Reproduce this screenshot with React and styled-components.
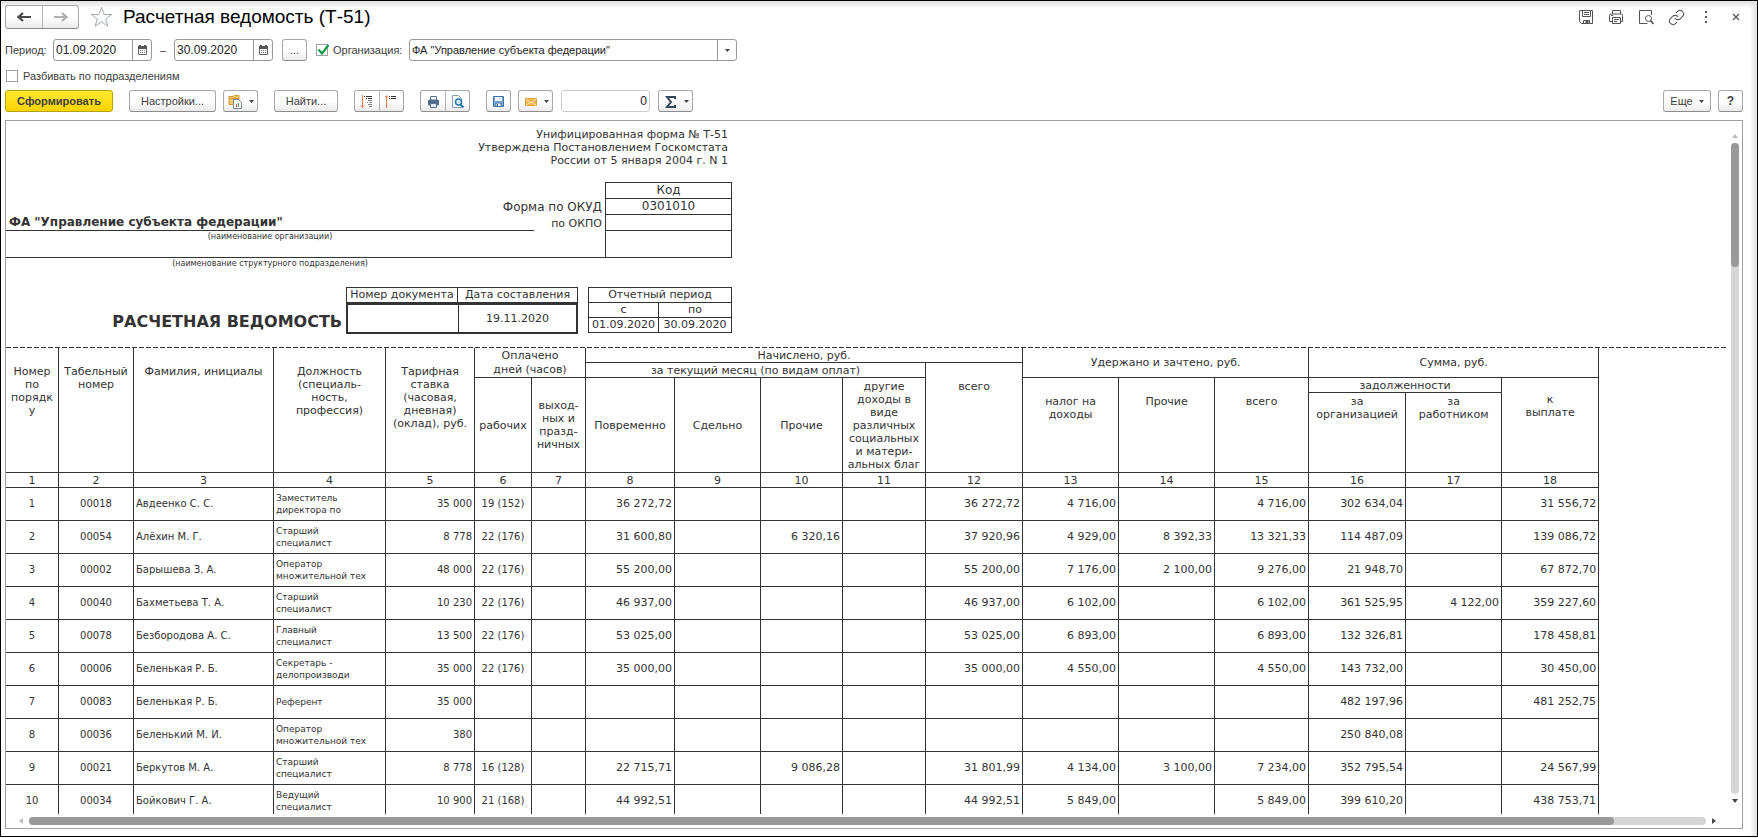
import { useState } from 'react';
import styled, { createGlobalStyle, css } from 'styled-components';
import { Link } from 'lucide-react';

const GlobalStyle = createGlobalStyle`
  * {
    box-sizing: border-box;
  }

  body {
    margin: 0;
    background-color: #fff;
    color: #404040;
    font-family: "Liberation Sans", Arial, sans-serif;
    font-size: 11px;
  }

  button, input, select {
    font: inherit;
    color: inherit;
    margin: 0;
  }
`;

const lineColor = '#333';

const StyledWindow = styled.div`
  display: flex;
  flex-direction: column;
  height: calc(100vh - 1px);
  padding: 4px 14px 7px 4px;
  border: 1px solid #000;
  box-shadow: inset -4px 4px 4px #e4e2e4;
`;

const StyledTitleBar = styled.header`
  display: flex;
  align-items: center;
  height: 24px;
`;

const StyledTitle = styled.h1`
  flex: 1;
  margin: 0 0 0 10px;
  color: #000;
  font-size: 19px;
  font-weight: normal;
  line-height: 24px;
`;

const StyledRow = styled.div`
  display: flex;
  align-items: center;
  height: ${(props) => props.$height};
  margin-top: ${(props) => props.$top};
`;

const buttonFace = css`
  border: 1px solid #a8a8a8;
  border-bottom-color: #8c8c8c;
  background: linear-gradient(#fff 50%, #ebebeb);
`;

const StyledButton = styled.button`
  ${buttonFace};
  display: flex;
  align-items: center;
  justify-content: center;
  gap: 6px;
  flex: none;
  width: ${(props) => props.$width};
  height: 22px;
  margin-left: ${(props) => props.$gap || '0'};
  padding: 0;
  border-radius: 3px;

  &.primary {
    border-color: #b7a20a;
    background: linear-gradient(#ffe92e, #f8d400);
    font-weight: bold;
  }

  &.strong {
    font-size: 12px;
    font-weight: bold;
  }
`;

const StyledButtonGroup = styled.div`
  ${buttonFace};
  display: flex;
  flex: none;
  height: ${(props) => props.$height || '22px'};
  margin-left: ${(props) => props.$gap || '0'};
  border-radius: 3px;

  button {
    display: flex;
    align-items: center;
    justify-content: center;
    width: ${(props) => props.$width};
    padding: 0;
    border: none;
    background: none;
  }

  button + button {
    border-left: 1px solid #b4b4b4;
  }
`;

const StyledStar = styled.button`
  display: flex;
  margin-left: 11px;
  padding: 0;
  border: none;
  background: none;
`;

const StyledWindowActions = styled.div`
  display: flex;
  margin-right: -8px;

  button {
    display: flex;
    align-items: center;
    justify-content: center;
    width: 30px;
    height: 24px;
    padding: 0;
    border: none;
    background: none;
  }
`;

const StyledPeriodLabel = styled.label`
  width: 48px;
`;

const StyledField = styled.div`
  display: flex;
  flex: none;
  width: ${(props) => props.$width};
  height: 22px;
  margin-left: ${(props) => props.$gap || '0'};
  border: 1px solid #999;
  border-radius: 3px;
  background-color: #fff;

  input, select {
    flex: 1;
    min-width: 0;
    padding: 0 2px;
    border: none;
    outline: none;
    background: none;
    appearance: none;
    color: #222;
  }

  input {
    font-size: 12px;
  }

  button {
    display: flex;
    align-items: center;
    justify-content: center;
    width: 19px;
    padding: 0;
    border: none;
    border-left: 1px solid #999;
    background: none;
  }

  &.total {
    border-color: #ccc;

    input {
      text-align: right;
    }
  }
`;

const StyledDash = styled.span`
  width: 22px;
  text-align: center;
`;

const StyledCheck = styled.label`
  position: relative;
  display: flex;
  align-items: center;
  gap: 5px;
  width: ${(props) => props.$width};
  margin-left: ${(props) => props.$gap};

  input {
    width: 12px;
    height: 12px;
    border: 1px solid #a0a0a0;
    background-color: #fff;
    appearance: none;
  }

  svg {
    position: absolute;
    left: 1px;
    top: 0;
    pointer-events: none;
  }
`;

const StyledSpacer = styled.div`
  flex: 1;
`;

const StyledFrame = styled.main`
  display: grid;
  grid-template-columns: minmax(0, 1fr) 14px;
  grid-template-rows: minmax(0, 1fr) 14px;
  flex: 1;
  min-height: 0;
  margin-top: 8px;
  border: 1px solid #a0a0a0;
`;

const StyledSheet = styled.div`
  overflow: hidden;
  color: ${lineColor};
  font-family: "DejaVu Sans", Verdana, sans-serif;
  font-size: 11px;
  line-height: 13px;
`;

const StyledApproval = styled.p`
  width: 726px;
  margin: 0;
  padding: 7px 4px 15px 0;
  text-align: right;
`;

const StyledCodeTable = styled.table`
  width: 726px;
  border-spacing: 0;
  table-layout: fixed;

  td, th {
    height: 16px;
    padding: 0 3px;
    font-size: 12px;
    font-weight: normal;
    text-align: right;
    line-height: 15px;
  }

  tr:nth-child(4) td {
    height: 27px;
  }

  .code {
    border: 1px solid ${lineColor};
    border-top: none;
    text-align: center;
  }

  th.code {
    height: 17px;
    border-top: 1px solid ${lineColor};
  }

  .label {
    font-size: 11px;
  }

  .organization {
    border-bottom: 1px solid ${lineColor};
    font-weight: bold;
    text-align: left;
  }

  .underlined {
    border-bottom: 1px solid ${lineColor};
  }

  .note {
    height: 12px;
    font-size: 8px;
    line-height: 12px;
    text-align: center;
    vertical-align: top;
  }
`;

const StyledDocument = styled.div`
  display: flex;
  align-items: flex-start;
  width: 726px;
  height: 60px;
  margin-top: 17px;
`;

const StyledDocumentTitle = styled.h2`
  flex: 1;
  margin: 0;
  padding: 24px 4px 0 0;
  font-size: 16px;
  line-height: 22px;
  text-align: right;
`;

const StyledSmallTable = styled.table`
  width: ${(props) => props.$width};
  margin-left: ${(props) => props.$gap || '0'};
  border: solid ${lineColor};
  border-width: 1px 0 0 1px;
  border-spacing: 0;
  table-layout: fixed;

  th, td {
    height: 15px;
    padding: 0;
    border: solid ${lineColor};
    border-width: 0 1px 1px 0;
    font-weight: normal;
    line-height: 14px;
    text-align: center;
    white-space: nowrap;
  }

  &.document td {
    height: 31px;
    border-width: 2px 1px 2px 1px;
  }

  &.document td:first-child {
    border-right-width: 0;
  }

  &.document td:last-child {
    border-right-width: 2px;
  }
`;

const StyledPayroll = styled.div`
  &::before {
    content: "";
    display: block;
    height: 1px;
    background: repeating-linear-gradient(90deg, ${lineColor} 0 5px, transparent 5px 7px);
  }
`;

const StyledPayrollTable = styled.table`
  width: 1593px;
  border-spacing: 0;
  table-layout: fixed;

  th, td {
    height: 15px;
    padding: 0;
    border: solid ${lineColor};
    border-width: 0 1px 1px 0;
    font-weight: normal;
    text-align: center;
    white-space: pre-line;
  }

  th.tall {
    height: 80px;
  }

  tbody td {
    height: 33px;
    font-size: 10px;
    line-height: 12px;
  }
`;

const StyledHeadCell = styled.th`
  vertical-align: ${(props) => (props.$top ? 'top' : 'middle')};

  && {
    padding-top: ${(props) => props.$top || '0'};
    line-height: ${(props) => props.$line || '13px'};
  }
`;

const StyledTextCell = styled.td`
  && {
    padding: 0 2px;
    font-size: ${(props) => props.$size || '10px'};
    text-align: left;
  }
`;

const StyledNumberCell = styled.td`
  && {
    padding-right: 2px;
    font-size: ${(props) => props.$size || '11px'};
    text-align: right;
  }
`;

const StyledScroll = styled.div`
  display: flex;
  align-items: center;
  flex-direction: ${(props) => (props.$vertical ? 'column' : 'row')};
  padding: ${(props) => (props.$vertical ? '8px 0 6px' : '0 6px 0 7px')};

  button {
    display: flex;
    align-items: center;
    justify-content: center;
    width: ${(props) => (props.$vertical ? '14px' : '16px')};
    height: ${(props) => (props.$vertical ? '14px' : '8px')};
    padding: 0;
    border: none;
    background: none;
  }
`;

const StyledTrack = styled.div`
  display: flex;
  flex: 1;
  flex-direction: inherit;
  align-items: stretch;
  width: 8px;
  min-height: 8px;
  border-radius: 4px;
  background-color: #d6d6d6;

  &::before {
    content: "";
    flex: 0 0 ${(props) => props.$thumb};
    border-radius: 4px;
    background-color: #999;
  }
`;

function Caret() {
  return (
    <svg width="5" height="3" viewBox="0 0 5 3" aria-hidden="true">
      <path d="M0 0h5L2.500 3z" fill="#444" />
    </svg>
  );
}

function Arrow({ direction }) {
  const color = direction === 'left' ? '#4a4a4a' : '#b0b0b0';
  const path = direction === 'right' ? 'M1 7h12M9 3l4.500 4-4.500 4' : 'M14 7H2M6 3L1.500 7 6 11';
  return (
    <svg width="15" height="14" viewBox="0 0 15 14" fill="none" aria-hidden="true">
      <path d={path} stroke={color} strokeWidth="2.200" />
    </svg>
  );
}

function ScrollArrow({ direction, muted }) {
  const paths = {
    up: 'M0 5l3-4 3 4z',
    down: 'M0 1l3 4 3-4z',
    left: 'M5 0L1 3l4 3z',
    right: 'M1 0l4 3-4 3z',
  };
  return (
    <svg width="6" height="6" viewBox="0 0 6 6" aria-hidden="true">
      <path d={paths[direction]} fill={muted ? '#bbb' : '#444'} />
    </svg>
  );
}

function CalendarIcon() {
  return (
    <svg width="9" height="10" viewBox="0 0 9 10" aria-hidden="true">
      <path d="M0.500 2h8v7.500h-8z" fill="#fff" stroke="#666" />
      <path d="M0 1h9v3H0zM1 0h2v2H1zM6 0h2v2H6z" fill="#555" />
      <path d="M2 5.500h5M2 7.500h5" stroke="#777" strokeDasharray="1 1" />
    </svg>
  );
}

function StarIcon() {
  return (
    <svg width="23" height="22" viewBox="0 0 23 22" fill="none" aria-hidden="true">
      <path
        d="M11.500 1.500l2.600 7h7.600l-6 4.500 2.200 7.300-6.400-4.400-6.400 4.400 2.200-7.300-6-4.500h7.600z"
        stroke="#a3abb5"
      />
    </svg>
  );
}

function CheckIcon() {
  return (
    <svg width="13" height="12" viewBox="0 0 13 12" fill="none" aria-hidden="true">
      <path d="M1.500 5.500l3.500 4L11.500 1" stroke="#0d9b48" strokeWidth="2.200" />
    </svg>
  );
}

function TitleIcon({ name }) {
  const icons = {
    save: (
      <>
        <path d="M1.500 1.500h13v13h-11l-2-2zM4.500 1.500v6h8v-6M6 3.500h5M6 5.500h5M5.500 14.500v-3h6v3" />
        <path d="M8 12h2v2H8z" fill="#555" />
      </>
    ),
    print: (
      <path d="M4.500 5V1.500h8V5M4.500 12.500h-3V6.500q0-1.500 1.500-1.500h10q1.500 0 1.500 1.500v6h-2M4.500 8.500h8v6h-8zM6 10.500h5M6 12.500h3M3 6.500h2" />
    ),
    preview: (
      <>
        <path d="M13.500 6V1.500h-12v13h8" />
        <circle cx="10.500" cy="9.500" r="3" />
        <path d="M12.500 11.500l3 3.500" strokeWidth="1.800" />
      </>
    ),
    more: <path d="M7 2h2v2H7zM7 7h2v2H7zM7 12h2v2H7z" fill="#555" stroke="none" />,
    close: <path d="M5 5l6 6M11 5l-6 6" strokeWidth="1.200" />,
  };
  if (name === 'link') {
    return <Link size={17} color="#555" strokeWidth={1.5} aria-hidden="true" />;
  }
  return (
    <svg width="16" height="16" viewBox="0 0 16 16" fill="none" stroke="#555" aria-hidden="true">
      {icons[name]}
    </svg>
  );
}

function ToolIcon({ name }) {
  const icons = {
    variants: (
      <>
        <path d="M1 2.500h4l1-1h5v9H1z" fill="#f2c76b" stroke="#d39a33" />
        <path d="M1 4.500h10" stroke="#d39a33" />
        <path d="M5.500 5.500h5l3 3v6h-8z" fill="#fff" stroke="#7b8794" />
        <path d="M8.500 13v-3" stroke="#d9483b" />
        <path d="M10.500 13v-4" stroke="#3aa25b" />
      </>
    ),
    expand: (
      <>
        <path d="M2.500 1v12M1 11.500l1.500 2 1.500-2" stroke="#f07a48" />
        <path d="M4 2.500h1M6 2.500h6M6 4.500h1M8 4.500h4" stroke="#333" />
        <path d="M8 6.500h4M7 8.500h1M9 8.500h3M8 10.500h4M9 12.500h3" stroke="#888" />
      </>
    ),
    collapse: (
      <>
        <path d="M2.500 14V2M1 3.500l1.500-2 1.500 2" stroke="#f07a48" />
        <path d="M5 2.500h1M7 2.500h5M5 4.500h1M7 4.500h5" stroke="#333" />
      </>
    ),
    print: (
      <>
        <path d="M4.500 6V2.500h6V6" fill="#fff" stroke="#5b7590" />
        <rect x="2" y="5.500" width="11" height="6" rx="1.500" fill="#4d6b8a" />
        <path d="M4.500 9.500h6v4h-6z" fill="#dfe9f2" stroke="#5b7590" />
      </>
    ),
    preview: (
      <>
        <path d="M2.500 1.500h6l3 3v9h-9z" fill="#fff" stroke="#7ea0be" />
        <circle cx="8.500" cy="8" r="3" fill="#d8ecf8" stroke="#2878ac" strokeWidth="1.500" />
        <path d="M10.500 10.500l3 3" stroke="#2878ac" strokeWidth="2" />
      </>
    ),
    save: (
      <>
        <path d="M2.500 2.500h10v10h-10z" fill="#7ba7d3" stroke="#4476a6" />
        <path d="M4 3h7v4H4z" fill="#e8f1fa" />
        <path d="M5 9h5v3.500H5z" fill="#fff" stroke="#4476a6" />
        <path d="M6 10h1v2H6z" fill="#4476a6" />
      </>
    ),
    mail: (
      <>
        <path d="M2.500 4.500h11v7h-11z" fill="#f3b649" stroke="#e0a03c" />
        <path d="M3 5l5 4 5-4M3 11.500l3.500-3M13 11.500l-3.500-3" stroke="#fff0c8" />
      </>
    ),
    sum: <path d="M12 5V3H4l4 5-4 5h8v-2" stroke="#33465a" strokeWidth="2" />,
  };
  return (
    <svg width="15" height="15" viewBox="0 0 15 15" fill="none" aria-hidden="true">
      {icons[name]}
    </svg>
  );
}

function DateField(props) {
  const [value, setValue] = useState(props.value);
  return (
    <StyledField $width="99px">
      <input
        id={props.id}
        aria-label={props.label}
        value={value}
        onChange={(event) => setValue(event.target.value)}
      />
      <button type="button" aria-label="Календарь">
        <CalendarIcon />
      </button>
    </StyledField>
  );
}

const columnWidths = [53, 75, 140, 112, 89, 57, 54, 89, 86, 82, 83, 97, 96, 96, 94, 97, 96, 97];

// position, number, name, post, rate, days worked, then columns 7 to 18
const rows = [
  ['1', '00018', 'Авдеенко С. С.', 'Заместитель\nдиректора по', '35 000', '19 (152)', '', '36 272,72', '', '', '', '36 272,72', '4 716,00', '', '4 716,00', '302 634,04', '', '31 556,72'],
  ['2', '00054', 'Алёхин М. Г.', 'Старший\nспециалист', '8 778', '22 (176)', '', '31 600,80', '', '6 320,16', '', '37 920,96', '4 929,00', '8 392,33', '13 321,33', '114 487,09', '', '139 086,72'],
  ['3', '00002', 'Барышева З. А.', 'Оператор\nмножительной тех', '48 000', '22 (176)', '', '55 200,00', '', '', '', '55 200,00', '7 176,00', '2 100,00', '9 276,00', '21 948,70', '', '67 872,70'],
  ['4', '00040', 'Бахметьева Т. А.', 'Старший\nспециалист', '10 230', '22 (176)', '', '46 937,00', '', '', '', '46 937,00', '6 102,00', '', '6 102,00', '361 525,95', '4 122,00', '359 227,60'],
  ['5', '00078', 'Безбородова А. С.', 'Главный\nспециалист', '13 500', '22 (176)', '', '53 025,00', '', '', '', '53 025,00', '6 893,00', '', '6 893,00', '132 326,81', '', '178 458,81'],
  ['6', '00006', 'Беленькая Р. Б.', 'Секретарь -\nделопроизводи', '35 000', '22 (176)', '', '35 000,00', '', '', '', '35 000,00', '4 550,00', '', '4 550,00', '143 732,00', '', '30 450,00'],
  ['7', '00083', 'Беленькая Р. Б.', 'Референт', '35 000', '', '', '', '', '', '', '', '', '', '', '482 197,96', '', '481 252,75'],
  ['8', '00036', 'Беленький М. И.', 'Оператор\nмножительной тех', '380', '', '', '', '', '', '', '', '', '', '', '250 840,08', '', ''],
  ['9', '00021', 'Беркутов М. А.', 'Старший\nспециалист', '8 778', '16 (128)', '', '22 715,71', '', '9 086,28', '', '31 801,99', '4 134,00', '3 100,00', '7 234,00', '352 795,54', '', '24 567,99'],
  ['10', '00034', 'Бойкович Г. А.', 'Ведущий\nспециалист', '10 900', '21 (168)', '', '44 992,51', '', '', '', '44 992,51', '5 849,00', '', '5 849,00', '399 610,20', '', '438 753,71'],
];

function PayrollCell({ index, children }) {
  if (index === 2) {
    return <StyledTextCell>{children}</StyledTextCell>;
  }
  if (index === 3) {
    return <StyledTextCell $size="9px">{children}</StyledTextCell>;
  }
  if (index === 4) {
    return <StyledNumberCell $size="10px">{children}</StyledNumberCell>;
  }
  if (index > 6) {
    return <StyledNumberCell>{children}</StyledNumberCell>;
  }
  return <td>{children}</td>;
}

function PayrollTable() {
  return (
    <StyledPayroll>
      <StyledPayrollTable>
        <colgroup>
          {columnWidths.map((width, index) => (
            <col key={index} width={width} />
          ))}
        </colgroup>
        <thead>
          <tr>
            <StyledHeadCell rowSpan={4} $top="17px">{'Номер\nпо\nпорядк\nу'}</StyledHeadCell>
            <StyledHeadCell rowSpan={4} $top="17px">{'Табельный\nномер'}</StyledHeadCell>
            <StyledHeadCell rowSpan={4} $top="17px">Фамилия, инициалы</StyledHeadCell>
            <StyledHeadCell rowSpan={4} $top="17px">{'Должность\n(специаль-\nность,\nпрофессия)'}</StyledHeadCell>
            <StyledHeadCell rowSpan={4} $top="17px">{'Тарифная\nставка\n(часовая,\nдневная)\n(оклад), руб.'}</StyledHeadCell>
            <StyledHeadCell rowSpan={2} colSpan={2} $line="14px">{'Оплачено\nдней (часов)'}</StyledHeadCell>
            <StyledHeadCell colSpan={5}>Начислено, руб.</StyledHeadCell>
            <StyledHeadCell rowSpan={2} colSpan={3}>Удержано и зачтено, руб.</StyledHeadCell>
            <StyledHeadCell rowSpan={2} colSpan={3}>Сумма, руб.</StyledHeadCell>
          </tr>
          <tr>
            <StyledHeadCell colSpan={4}>за текущий месяц (по видам оплат)</StyledHeadCell>
            <StyledHeadCell rowSpan={3} $top="17px">всего</StyledHeadCell>
          </tr>
          <tr>
            <StyledHeadCell rowSpan={2}>рабочих</StyledHeadCell>
            <StyledHeadCell rowSpan={2}>{'выход-\nных и\nпразд-\nничных'}</StyledHeadCell>
            <StyledHeadCell rowSpan={2}>Повременно</StyledHeadCell>
            <StyledHeadCell rowSpan={2}>Сдельно</StyledHeadCell>
            <StyledHeadCell rowSpan={2}>Прочие</StyledHeadCell>
            <StyledHeadCell rowSpan={2}>{'другие\nдоходы в\nвиде\nразличных\nсоциальных\nи матери-\nальных благ'}</StyledHeadCell>
            <StyledHeadCell rowSpan={2} $top="17px">{'налог на\nдоходы'}</StyledHeadCell>
            <StyledHeadCell rowSpan={2} $top="17px">Прочие</StyledHeadCell>
            <StyledHeadCell rowSpan={2} $top="17px">всего</StyledHeadCell>
            <StyledHeadCell colSpan={2}>задолженности</StyledHeadCell>
            <StyledHeadCell rowSpan={2} $top="15px">{'к\nвыплате'}</StyledHeadCell>
          </tr>
          <tr>
            <StyledHeadCell className="tall" $top="2px">{'за\nорганизацией'}</StyledHeadCell>
            <StyledHeadCell className="tall" $top="2px">{'за\nработником'}</StyledHeadCell>
          </tr>
          <tr>
            {columnWidths.map((width, index) => (
              <StyledHeadCell key={index}>{index + 1}</StyledHeadCell>
            ))}
          </tr>
        </thead>
        <tbody>
          {rows.map((row) => (
            <tr key={row[0]}>
              {row.map((value, index) => (
                <PayrollCell key={index} index={index}>
                  {value}
                </PayrollCell>
              ))}
            </tr>
          ))}
        </tbody>
      </StyledPayrollTable>
    </StyledPayroll>
  );
}

function SheetHead() {
  return (
    <>
      <StyledApproval>
        Унифицированная форма № Т-51
        <br />
        Утверждена Постановлением Госкомстата
        <br />
        России от 5 января 2004 г. N 1
      </StyledApproval>
      <StyledCodeTable>
        <colgroup>
          <col width="528" />
          <col width="71" />
          <col width="127" />
        </colgroup>
        <tbody>
          <tr>
            <td colSpan={2} />
            <th className="code">Код</th>
          </tr>
          <tr>
            <td colSpan={2}>Форма по ОКУД</td>
            <td className="code">0301010</td>
          </tr>
          <tr>
            <td className="organization">ФА "Управление субъекта федерации"</td>
            <td className="label">по ОКПО</td>
            <td className="code" />
          </tr>
          <tr>
            <td className="note underlined">(наименование организации)</td>
            <td className="underlined" />
            <td className="code" />
          </tr>
          <tr>
            <td className="note">(наименование структурного подразделения)</td>
          </tr>
        </tbody>
      </StyledCodeTable>
      <StyledDocument>
        <StyledDocumentTitle>РАСЧЕТНАЯ ВЕДОМОСТЬ</StyledDocumentTitle>
        <StyledSmallTable className="document" $width="232px">
          <colgroup>
            <col width="111" />
            <col />
          </colgroup>
          <tbody>
            <tr>
              <th>Номер документа</th>
              <th>Дата составления</th>
            </tr>
            <tr>
              <td />
              <td>19.11.2020</td>
            </tr>
          </tbody>
        </StyledSmallTable>
        <StyledSmallTable $width="144px" $gap="10px">
          <colgroup>
            <col width="70" />
            <col />
          </colgroup>
          <tbody>
            <tr>
              <th colSpan={2}>Отчетный период</th>
            </tr>
            <tr>
              <th>с</th>
              <th>по</th>
            </tr>
            <tr>
              <td>01.09.2020</td>
              <td>30.09.2020</td>
            </tr>
          </tbody>
        </StyledSmallTable>
      </StyledDocument>
    </>
  );
}

const windowActions = [
  { key: 'save', label: 'Сохранить' },
  { key: 'print', label: 'Печать' },
  { key: 'preview', label: 'Предварительный просмотр' },
  { key: 'link', label: 'Получить ссылку' },
  { key: 'more', label: 'Дополнительно' },
  { key: 'close', label: 'Закрыть' },
];

function Toolbar() {
  return (
    <StyledRow $height="22px" $top="7px">
      <StyledButton className="primary" $width="108px">Сформировать</StyledButton>
      <StyledButton $width="87px" $gap="16px">Настройки...</StyledButton>
      <StyledButton $width="35px" $gap="7px" aria-label="Варианты отчета">
        <ToolIcon name="variants" />
        <Caret />
      </StyledButton>
      <StyledButton $width="64px" $gap="16px">Найти...</StyledButton>
      <StyledButtonGroup $width="24px" $gap="16px">
        <button type="button" aria-label="Развернуть группы">
          <ToolIcon name="expand" />
        </button>
        <button type="button" aria-label="Свернуть группы">
          <ToolIcon name="collapse" />
        </button>
      </StyledButtonGroup>
      <StyledButtonGroup $width="24px" $gap="16px">
        <button type="button" aria-label="Печать">
          <ToolIcon name="print" />
        </button>
        <button type="button" aria-label="Предварительный просмотр">
          <ToolIcon name="preview" />
        </button>
      </StyledButtonGroup>
      <StyledButton $width="25px" $gap="16px" aria-label="Сохранить">
        <ToolIcon name="save" />
      </StyledButton>
      <StyledButton $width="35px" $gap="7px" aria-label="Отправить">
        <ToolIcon name="mail" />
        <Caret />
      </StyledButton>
      <StyledField className="total" $width="89px" $gap="8px">
        <input aria-label="Сумма" defaultValue="0" />
      </StyledField>
      <StyledButton $width="35px" $gap="8px" aria-label="Вид расчета">
        <ToolIcon name="sum" />
        <Caret />
      </StyledButton>
      <StyledSpacer />
      <StyledButton $width="48px">
        Еще
        <Caret />
      </StyledButton>
      <StyledButton className="strong" $width="25px" $gap="7px">?</StyledButton>
    </StyledRow>
  );
}

export default function App() {
  const [byOrganization, setByOrganization] = useState(true);

  return (
    <>
      <GlobalStyle />
      <StyledWindow>
        <StyledTitleBar>
          <StyledButtonGroup $width="36px" $height="24px">
            <button type="button" aria-label="Назад">
              <Arrow direction="left" />
            </button>
            <button type="button" aria-label="Вперед">
              <Arrow direction="right" />
            </button>
          </StyledButtonGroup>
          <StyledStar type="button" aria-label="Избранное">
            <StarIcon />
          </StyledStar>
          <StyledTitle>Расчетная ведомость (Т-51)</StyledTitle>
          <StyledWindowActions>
            {windowActions.map((action) => (
              <button key={action.key} type="button" aria-label={action.label}>
                <TitleIcon name={action.key} />
              </button>
            ))}
          </StyledWindowActions>
        </StyledTitleBar>

        <StyledRow $height="22px" $top="10px">
          <StyledPeriodLabel htmlFor="period-start">Период:</StyledPeriodLabel>
          <DateField id="period-start" value="01.09.2020" />
          <StyledDash>–</StyledDash>
          <DateField label="Конец периода" value="30.09.2020" />
          <StyledButton $width="25px" $gap="9px" aria-label="Выбрать период">...</StyledButton>
          <StyledCheck $gap="9px" $width="93px">
            <input
              type="checkbox"
              checked={byOrganization}
              onChange={() => setByOrganization(!byOrganization)}
            />
            {byOrganization ? <CheckIcon /> : <></>}
            Организация:
          </StyledCheck>
          <StyledField $width="328px">
            <select aria-label="Организация">
              <option>ФА "Управление субъекта федерации"</option>
            </select>
            <button type="button" aria-label="Открыть список">
              <Caret />
            </button>
          </StyledField>
        </StyledRow>

        <StyledRow $height="14px" $top="8px">
          <StyledCheck $gap="1px">
            <input type="checkbox" />
            Разбивать по подразделениям
          </StyledCheck>
        </StyledRow>

        <Toolbar />

        <StyledFrame>
          <StyledSheet>
            <SheetHead />
            <PayrollTable />
          </StyledSheet>
          <StyledScroll $vertical>
            <button type="button" aria-label="Вверх">
              <ScrollArrow direction="up" muted />
            </button>
            <StyledTrack $thumb="19%" />
            <button type="button" aria-label="Вниз">
              <ScrollArrow direction="down" />
            </button>
          </StyledScroll>
          <StyledScroll>
            <button type="button" aria-label="Влево">
              <ScrollArrow direction="left" muted />
            </button>
            <StyledTrack $thumb="calc(100% - 92px)" />
            <button type="button" aria-label="Вправо">
              <ScrollArrow direction="right" />
            </button>
          </StyledScroll>
        </StyledFrame>
      </StyledWindow>
    </>
  );
}
